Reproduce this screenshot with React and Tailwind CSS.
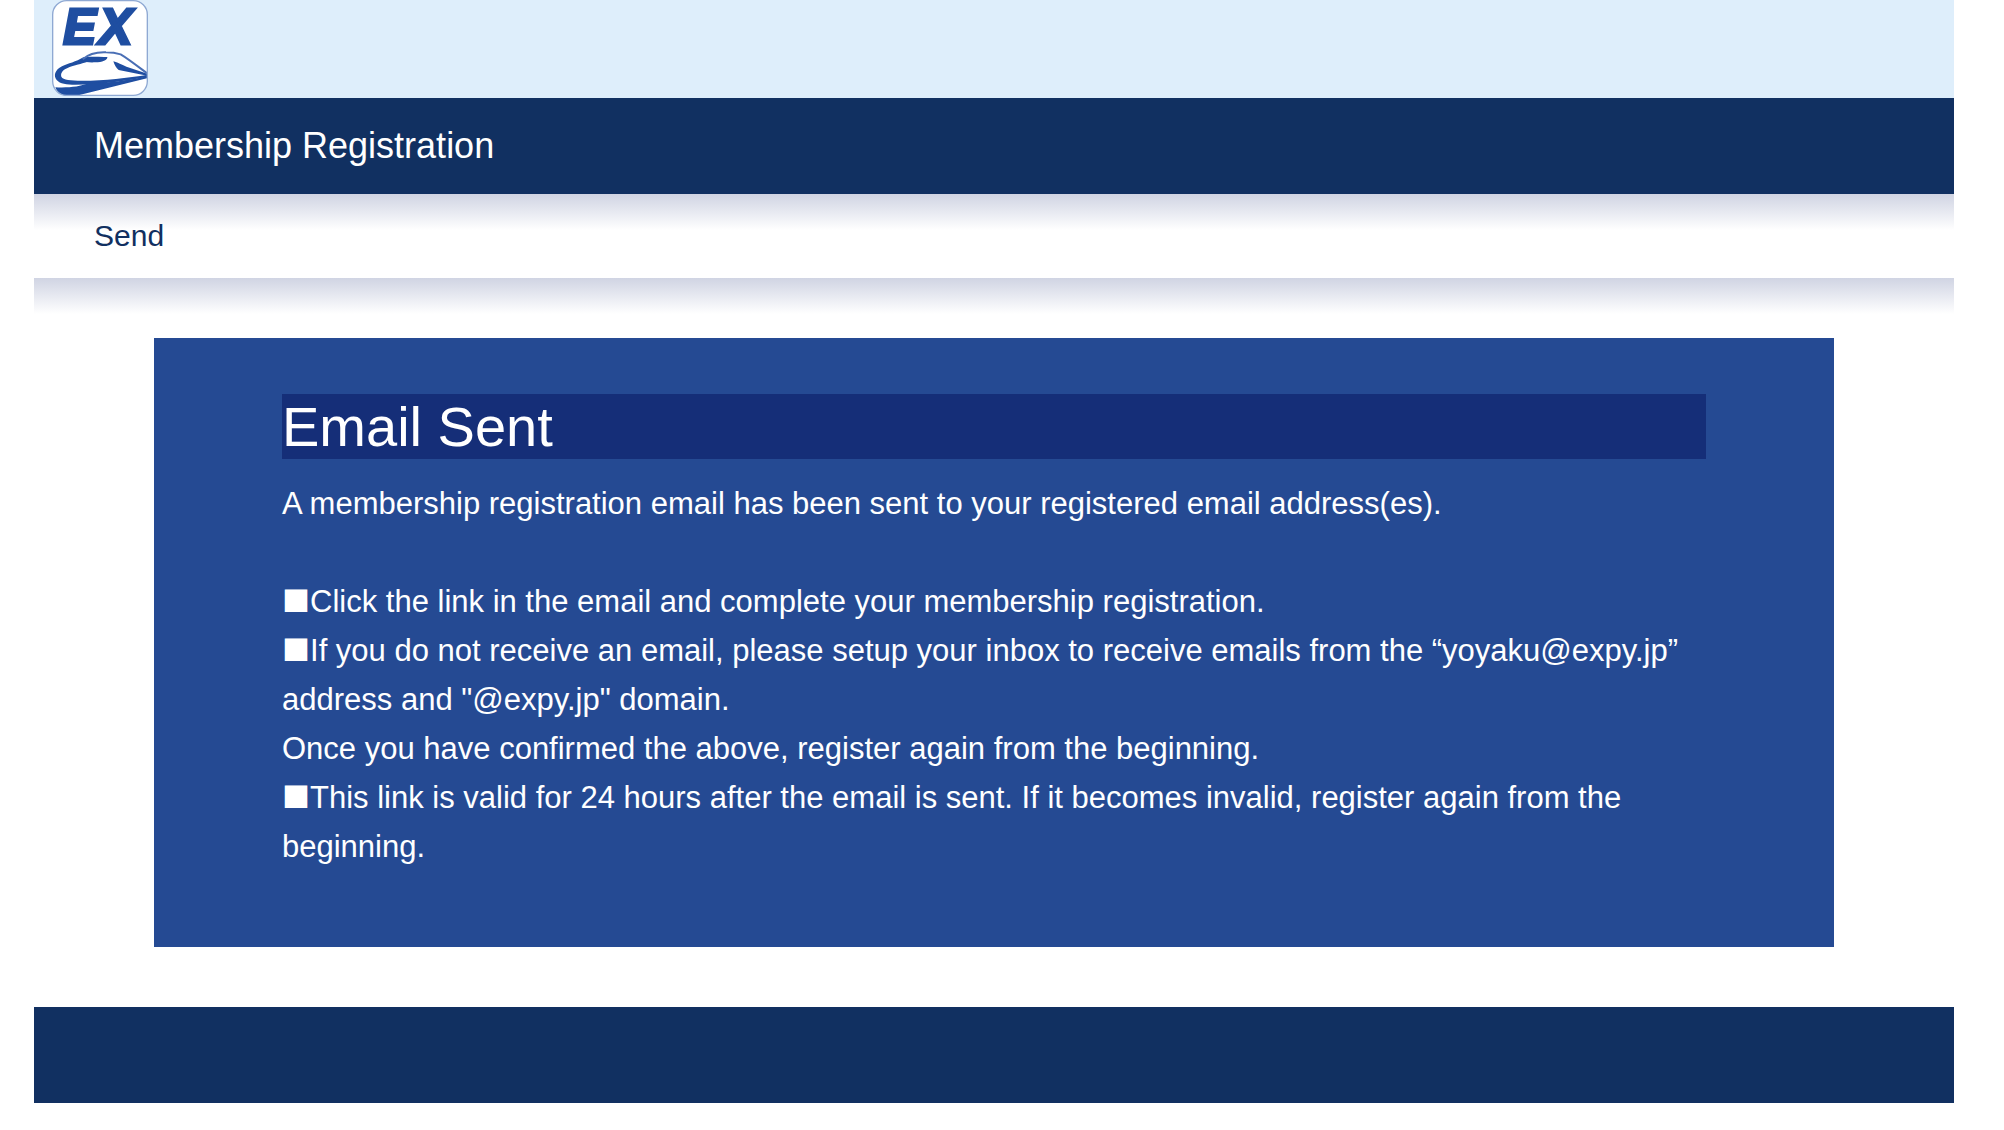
function Logo() {
  return (
    <svg viewBox="0 0 288 288" className="block size-24" role="img" aria-label="EX">
      <defs>
        <clipPath id="badge">
          <rect x="1" y="1" width="286" height="286" rx="42" />
        </clipPath>
      </defs>
      <rect x="2" y="2" width="284" height="284" rx="42" fill="#fff" />
      <text
        y="132"
        fontSize="148"
        fontWeight="700"
        fontStyle="italic"
        fontFamily="Liberation Sans, Arial, sans-serif"
        fill="#1f4ea1"
        stroke="#1f4ea1"
        strokeWidth="9"
      >
        <tspan x="34">E</tspan>
        <tspan x="142">X</tspan>
      </text>
      <g clipPath="url(#badge)" fill="#1f4ea1">
        {/* nose and underside of the body */}
        <path d="M94 172 C72 186 48 190 30 199 C8 210 4 228 14 240 C24 252 44 254 70 254 C150 254 220 242 288 230 L288 224 C225 234 160 242 90 242 C55 242 34 240 28 230 C24 216 36 206 62 198 C86 192 100 188 112 184 Z" />
        {/* windscreen */}
        <path d="M92 174 C110 168 140 172 166 171 C168 180 150 187 130 187 C112 188 98 186 88 184 Z" />
        {/* side window */}
        <path d="M184 184 C204 190 216 198 228 202 L286 221 L286 227 L200 210 C192 204 188 196 184 184 Z" />
        {/* track swoosh */}
        <path d="M10 262 C50 264 84 260 108 250 C170 250 230 240 288 229 L288 234 L66 289 L40 289 C24 284 14 274 10 262 Z" />
        {/* roof line */}
        <path
          d="M92 178 C112 160 136 156 162 157 C180 157 196 160 206 163 C228 176 256 198 288 222"
          fill="none"
          stroke="#4a6fb5"
          strokeWidth="6"
        />
      </g>
      <rect x="2" y="2" width="284" height="284" rx="42" fill="none" stroke="#8fa9d3" strokeWidth="4" />
    </svg>
  );
}

function Mark() {
  return <span className="font-['Noto_Sans_CJK_JP',sans-serif] text-[28px] leading-none">■</span>;
}

export default function App() {
  return (
    <div className="min-h-screen bg-white pr-[50px] pl-[34px] font-['Liberation_Sans',Arial,'Noto_Sans_CJK_JP',sans-serif] text-white">
      <header>
        <div className="bg-[#deeefb] px-[18px] pb-0.5">
          <Logo />
        </div>
        <h1 className="bg-[#113061] px-[60px] text-[36px] leading-[96px]">Membership Registration</h1>
      </header>

      <h2 className="bg-linear-to-b from-[#d0d4e3] to-white to-[36px] px-[60px] text-[30px] leading-[84px] text-[#113061]">
        Send
      </h2>

      <main className="bg-linear-to-b from-[#d0d4e3] to-white to-[36px] px-[120px] py-[60px]">
        <section className="bg-[#254a93] px-32 pt-14 pb-[76px]">
          <h3 className="mb-5 bg-[#152e78] text-[56px] leading-[65px]">Email Sent</h3>
          <p className="text-[31px] leading-[49px]">
            A membership registration email has been sent to your registered email address(es).
            <br />
            <br />
            <Mark />
            Click the link in the email and complete your membership registration.
            <br />
            <Mark />
            If you do not receive an email, please setup your inbox to receive emails from the “yoyaku@expy.jp” address
            and "@expy.jp" domain.
            <br />
            Once you have confirmed the above, register again from the beginning.
            <br />
            <Mark />
            This link is valid for 24 hours after the email is sent. If it becomes invalid, register again from the
            beginning.
          </p>
        </section>
      </main>

      <footer className="h-24 bg-[#113061]" />
    </div>
  );
}
